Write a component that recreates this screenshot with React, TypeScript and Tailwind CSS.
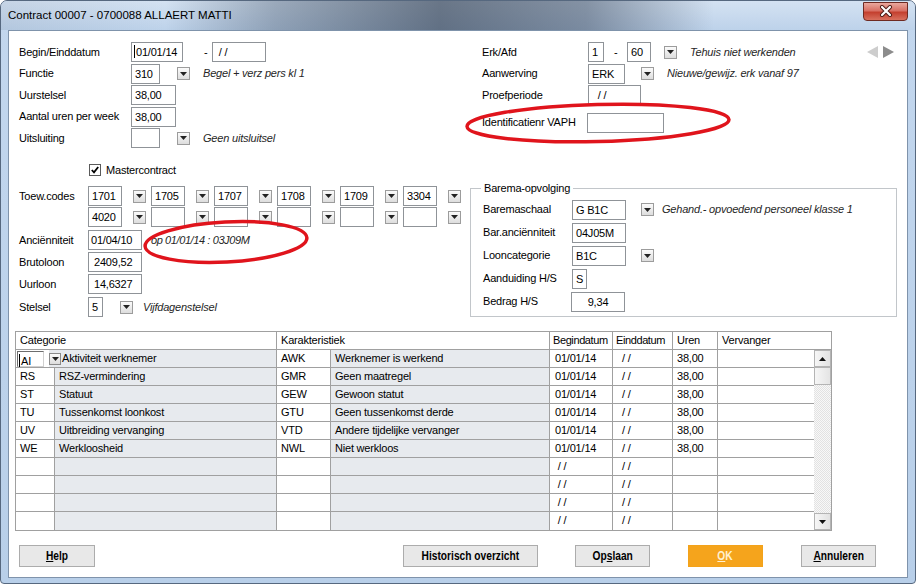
import React from "react";

type Kids = { className?: string; children?: React.ReactNode };

function Field({ className = "", children }: Kids) {
  return (
    <div
      className={
        "h-[20px] shrink-0 overflow-hidden whitespace-nowrap border border-[#8f9398] bg-white px-[3px] leading-[18px] " +
        className
      }
    >
      {children}
    </div>
  );
}

function Drop({ className = "" }: { className?: string }) {
  return (
    <div
      className={
        "flex h-[13px] w-[13px] shrink-0 items-center justify-center border border-[#9c9c9c] bg-[linear-gradient(#fbfbfb,#dddddd)] " +
        className
      }
    >
      <svg width="7" height="4" viewBox="0 0 7 4">
        <path d="M0 0h7L3.5 4z" fill="#222" />
      </svg>
    </div>
  );
}

function Row({ className = "", children }: Kids) {
  return <div className={"flex h-[20px] shrink-0 items-center " + className}>{children}</div>;
}

function Desc({ className = "", children }: Kids) {
  return <span className={"whitespace-nowrap italic text-[#262626] " + className}>{children}</span>;
}

function Caret() {
  return <span className="mr-[1px] inline-block h-[13px] w-px translate-y-[2px] bg-black" />;
}

const TOEW1 = ["1701", "1705", "1707", "1708", "1709", "3304"];
const TOEW2 = ["4020", "", "", "", "", ""];

const ROWS = [
  ["AI", "Aktiviteit werknemer", "AWK", "Werknemer is werkend", "01/01/14", "/ /", "38,00"],
  ["RS", "RSZ-vermindering", "GMR", "Geen maatregel", "01/01/14", "/ /", "38,00"],
  ["ST", "Statuut", "GEW", "Gewoon statut", "01/01/14", "/ /", "38,00"],
  ["TU", "Tussenkomst loonkost", "GTU", "Geen tussenkomst derde", "01/01/14", "/ /", "38,00"],
  ["UV", "Uitbreiding vervanging", "VTD", "Andere tijdelijke vervanger", "01/01/14", "/ /", "38,00"],
  ["WE", "Werkloosheid", "NWL", "Niet werkloos", "01/01/14", "/ /", "38,00"],
  ["", "", "", "", "\u00a0/ /", "/ /", ""],
  ["", "", "", "", "\u00a0/ /", "/ /", ""],
  ["", "", "", "", "\u00a0/ /", "/ /", ""],
  ["", "", "", "", "\u00a0/ /", "/ /", ""],
];

const cell = "h-full shrink-0 overflow-hidden whitespace-nowrap border-r border-[#a0a0a0] px-[4px] leading-[17px]";
const grey = "bg-[#e7eaee]";

function ScrollBtn({ up }: { up?: boolean }) {
  return (
    <div className="flex h-[17px] shrink-0 items-center justify-center border border-[#b4b4b4] bg-[linear-gradient(90deg,#f6f6f6,#e2e2e2)]">
      <svg width="7" height="4" viewBox="0 0 7 4">
        <path d={up ? "M0 4h7L3.5 0z" : "M0 0h7L3.5 4z"} fill="#111" />
      </svg>
    </div>
  );
}

function Btn({ className = "", children }: Kids) {
  return (
    <div
      className={
        "flex h-[22px] shrink-0 items-center justify-center border border-[#acacac] text-[12px] font-bold tracking-normal " +
        className
      }
    >
      <span className="inline-block scale-x-[0.85] whitespace-nowrap">{children}</span>
    </div>
  );
}

export default function App() {
  return (
    <div className="h-[585px] w-[922px] overflow-hidden bg-white font-['Liberation_Sans',Arial,sans-serif] text-[11px] leading-none tracking-[-0.2px] text-black">
      <div className="flex h-[584px] w-[916px] flex-col rounded-t-[7px] rounded-b-[4px] border border-[#56687f] bg-[linear-gradient(#c3d7ee,#b8cfe9)]">
        {/* title bar */}
        <div className="flex h-[29px] shrink-0 items-center rounded-t-[6px] bg-[linear-gradient(90deg,rgba(120,135,155,0.15)_0%,transparent_18%,rgba(70,85,105,0.4)_30%,rgba(40,52,70,0.62)_48%,rgba(55,68,88,0.5)_64%,transparent_78%),linear-gradient(#d4e2f2,#bdd2ea)] pl-[7px]">
          <span className="text-[11.5px] tracking-normal text-black">Contract 00007 - 0700088 ALLAERT MATTI</span>
          <div className="-mt-[9px] mr-[7px] ml-auto flex h-[19px] w-[45px] items-center justify-center rounded-b-[4px] border border-[#6e2a22] bg-[linear-gradient(#eaa89e,#d87064_45%,#c4402f_55%,#d8705e)]">
            <svg width="14" height="12" viewBox="0 0 14 12">
              <path d="M3 2l8 8M11 2l-8 8" stroke="#4a1a14" strokeWidth="4" strokeLinecap="round" />
              <path d="M3 2l8 8M11 2l-8 8" stroke="#fff" strokeWidth="2.2" strokeLinecap="round" />
            </svg>
          </div>
        </div>

        {/* client area */}
        <div className="relative mx-[7px] h-[548px] shrink-0 border border-[#7f93ab] bg-white">
          <div className="flex pt-[11px]">
            {/* left column */}
            <div className="ml-[10px] w-[451px] shrink-0">
              <div className="flex flex-col gap-[1.5px]">
                <Row>
                  <span className="w-[112px] shrink-0">Begin/Einddatum</span>
                  <Field className="w-[52px] pl-[2px]">
                    <Caret />
                    01/01/14
                  </Field>
                  <span className="ml-[21px] w-[4px]">-</span>
                  <Field className="ml-[4px] w-[54px]">{"\u00a0/ /"}</Field>
                </Row>
                <Row>
                  <span className="w-[112px] shrink-0">Functie</span>
                  <Field className="w-[29px]">310</Field>
                  <Drop className="ml-[17px]" />
                  <Desc className="ml-[13px]">Begel + verz pers kl 1</Desc>
                </Row>
                <Row>
                  <span className="w-[112px] shrink-0">Uurstelsel</span>
                  <Field className="w-[45px]">38,00</Field>
                </Row>
                <Row>
                  <span className="w-[112px] shrink-0">Aantal uren per week</span>
                  <Field className="w-[45px]">38,00</Field>
                </Row>
                <Row>
                  <span className="w-[112px] shrink-0">Uitsluiting</span>
                  <Field className="w-[29px]" />
                  <Drop className="ml-[17px]" />
                  <Desc className="ml-[13px]">Geen uitsluitsel</Desc>
                </Row>
              </div>

              <Row className="mt-[12px] pl-[70px]">
                <div className="flex h-[12px] w-[12px] items-center justify-center border border-[#5a5a5a] bg-white">
                  <svg width="8" height="8" viewBox="0 0 8 8">
                    <path d="M0.8 4l2.2 2.4L7.2 1" fill="none" stroke="#000" strokeWidth="1.8" />
                  </svg>
                </div>
                <span className="ml-[5px]">Mastercontract</span>
              </Row>

              <Row className="mt-[6px]">
                <span className="w-[69px] shrink-0">Toew.codes</span>
                {TOEW1.map((c, i) => (
                  <React.Fragment key={i}>
                    <Field className={i === 0 ? "w-[34px]" : "ml-[5px] w-[34px]"}>{c}</Field>
                    <Drop className="ml-[11px]" />
                  </React.Fragment>
                ))}
              </Row>
              <Row className="mt-[1px]">
                <span className="w-[69px] shrink-0" />
                {TOEW2.map((c, i) => (
                  <React.Fragment key={i}>
                    <Field className={i === 0 ? "w-[34px]" : "ml-[5px] w-[34px]"}>{c}</Field>
                    <Drop className="ml-[11px]" />
                  </React.Fragment>
                ))}
              </Row>
              <Row className="mt-[3px]">
                <span className="w-[69px] shrink-0">Anciënniteit</span>
                <Field className="w-[54px] pl-[2px]">01/04/10</Field>
                <Desc className="ml-[9px] tracking-[-0.4px]">op 01/01/14 : 03J09M</Desc>
              </Row>
              <Row className="mt-[2px]">
                <span className="w-[69px] shrink-0">Brutoloon</span>
                <Field className="w-[54px] pl-[5px]">2409,52</Field>
              </Row>
              <Row className="mt-[2px]">
                <span className="w-[69px] shrink-0">Uurloon</span>
                <Field className="w-[54px] pl-[5px]">14,6327</Field>
              </Row>
              <Row className="mt-[3px]">
                <span className="w-[69px] shrink-0">Stelsel</span>
                <Field className="w-[15px]">5</Field>
                <Drop className="ml-[17px]" />
                <Desc className="ml-[10px]">Vijfdagenstelsel</Desc>
              </Row>
            </div>

            {/* right column */}
            <div className="flex-1 pr-[10px]">
              <div className="flex flex-col gap-[1.5px] pl-[12px]">
                <Row>
                  <span className="w-[106px] shrink-0">Erk/Afd</span>
                  <Field className="w-[16px]">1</Field>
                  <span className="ml-[10px] w-[4px]">-</span>
                  <Field className="ml-[9px] w-[24px]">60</Field>
                  <Drop className="ml-[13px]" />
                  <Desc className="ml-[13px]">Tehuis niet werkenden</Desc>
                  <div className="mr-[3px] ml-auto flex items-center gap-[5px]">
                    <svg width="11" height="12" viewBox="0 0 11 12">
                      <path d="M11 0v12L0 6z" fill="#cdcdcd" />
                    </svg>
                    <svg width="11" height="12" viewBox="0 0 11 12">
                      <path d="M0 0v12l11-6z" fill="#8c8c8c" />
                    </svg>
                  </div>
                </Row>
                <Row>
                  <span className="w-[106px] shrink-0">Aanwerving</span>
                  <Field className="w-[37px]">ERK</Field>
                  <Drop className="ml-[16px]" />
                  <Desc className="ml-[13px]">Nieuwe/gewijz. erk vanaf 97</Desc>
                </Row>
                <Row>
                  <span className="w-[106px] shrink-0">Proefperiode</span>
                  <Field className="w-[53px]">{"\u00a0\u00a0/ /"}</Field>
                </Row>
                <Row className="mt-[6px]">
                  <span className="w-[105px] shrink-0">Identificatienr VAPH</span>
                  <Field className="w-[77px]" />
                </Row>
              </div>

              <div className="relative mt-[55px] border border-[#c2c6ca] pt-[11px] pb-[4px] pl-[12px]">
                <span className="absolute -top-[7px] left-[10px] bg-white px-[3px] leading-[13px]">
                  Barema-opvolging
                </span>
                <div className="flex flex-col gap-[3px]">
                  <Row>
                    <span className="w-[89px] shrink-0">Baremaschaal</span>
                    <Field className="w-[54px]">G B1C</Field>
                    <Drop className="ml-[15px]" />
                    <Desc className="ml-[8px]">Gehand.- opvoedend personeel klasse 1</Desc>
                  </Row>
                  <Row>
                    <span className="w-[89px] shrink-0">Bar.anciënniteit</span>
                    <Field className="w-[54px]">04J05M</Field>
                  </Row>
                  <Row>
                    <span className="w-[89px] shrink-0">Looncategorie</span>
                    <Field className="w-[54px]">B1C</Field>
                    <Drop className="ml-[15px]" />
                  </Row>
                  <Row>
                    <span className="w-[89px] shrink-0">Aanduiding H/S</span>
                    <Field className="w-[15px]">S</Field>
                  </Row>
                  <Row>
                    <span className="w-[88px] shrink-0">Bedrag H/S</span>
                    <Field className="w-[54px] text-center">9,34</Field>
                  </Row>
                </div>
              </div>
            </div>
          </div>

          {/* grid */}
          <div className="mt-[14px] ml-[6px] w-[817px] border border-[#a0a0a0]">
            <div className="flex h-[18px] border-b border-[#a0a0a0]">
              <div className={cell + " w-[261px]"}>Categorie</div>
              <div className={cell + " w-[273px]"}>Karakteristiek</div>
              <div className={cell + " w-[63px] pl-[3px] tracking-[-0.4px]"}>Begindatum</div>
              <div className={cell + " w-[60px] pl-[3px] tracking-[-0.4px]"}>Einddatum</div>
              <div className={cell + " w-[45px]"}>Uren</div>
              <div className={cell + " flex-1 border-r-0"}>Vervanger</div>
            </div>
            <div className="flex">
              <div className="w-[798px] shrink-0">
                {ROWS.map((r, i) => (
                  <div key={i} className="flex h-[18px] border-b border-[#a0a0a0] last:border-b-0">
                    {i === 0 ? (
                      <div className="flex h-full w-[261px] shrink-0 items-center border-r border-[#a0a0a0]">
                        <div className="flex h-full w-[33px] shrink-0 items-center bg-white pl-[1px]">
                          <div className="h-[16px] w-[27px] border border-[#6d6d6d] border-r-[#d0d0d0] border-b-[#d0d0d0] bg-white pl-[1px] leading-[14px]">
                            <Caret />
                            {r[0]}
                          </div>
                        </div>
                        <div className={"flex h-full flex-1 items-center " + grey}>
                          <div className="flex h-[12px] w-[12px] shrink-0 items-center justify-center border border-[#8a8a8a] bg-[linear-gradient(#fafafa,#dcdcdc)]">
                            <svg width="7" height="4" viewBox="0 0 7 4">
                              <path d="M0 0h7L3.5 4z" fill="#222" />
                            </svg>
                          </div>
                          <span className="ml-[1px] whitespace-nowrap leading-[17px]">{r[1]}</span>
                        </div>
                      </div>
                    ) : (
                      <>
                        <div className={cell + " w-[39px]"}>{r[0]}</div>
                        <div className={cell + " w-[222px] " + grey}>{r[1]}</div>
                      </>
                    )}
                    <div className={cell + " w-[54px]"}>{r[2]}</div>
                    <div className={cell + " w-[219px] " + grey}>{r[3]}</div>
                    <div className={cell + " w-[63px] pl-[5px]"}>{r[4]}</div>
                    <div className={cell + " w-[60px] pl-[9px]"}>{r[5]}</div>
                    <div className={cell + " w-[45px]"}>{r[6]}</div>
                    <div className={cell + " w-[96px] border-r-0"} />
                  </div>
                ))}
              </div>
              <div className="flex w-[17px] shrink-0 flex-col">
                <ScrollBtn up />
                <div className="h-[18px] shrink-0 border border-[#b4b4b4] bg-[linear-gradient(90deg,#f6f6f6,#e4e4e4)]" />
                <div className="flex-1 bg-[repeating-conic-gradient(#e2e2e2_0%_25%,#f8f8f8_0%_50%)] [background-size:2px_2px]" />
                <ScrollBtn />
              </div>
            </div>
          </div>

          {/* buttons */}
          <div className="mt-[14px] flex pl-[10px]">
            <Btn className="w-[76px] bg-[#e8e8e8]">
              <u>H</u>elp
            </Btn>
            <Btn className="ml-[308px] w-[135px] bg-[#e8e8e8]">Historisch overzicht</Btn>
            <Btn className="ml-[37px] w-[75px] bg-[#e8e8e8]">
              Op<u>s</u>laan
            </Btn>
            <Btn className="ml-[38px] w-[75px] border-[#f3a21a] bg-[#f5a41c] text-[#fff0cf]">
              <u>O</u>K
            </Btn>
            <Btn className="ml-[38px] w-[75px] bg-[#e8e8e8]">
              <u>A</u>nnuleren
            </Btn>
          </div>

          {/* red annotation marks */}
          <svg className="pointer-events-none absolute top-[70px] left-[454px]" width="270" height="44" viewBox="0 0 270 44">
            <ellipse cx="135" cy="22" rx="131" ry="18.5" fill="none" stroke="#e0141c" strokeWidth="3.5" transform="rotate(-1.5 135 22)" />
          </svg>
          <svg className="pointer-events-none absolute top-[187px] left-[131px]" width="172" height="48" viewBox="0 0 172 48">
            <ellipse cx="86" cy="24" rx="81" ry="20" fill="none" stroke="#e0141c" strokeWidth="3.5" transform="rotate(-3 86 24)" />
          </svg>
        </div>
      </div>
    </div>
  );
}
